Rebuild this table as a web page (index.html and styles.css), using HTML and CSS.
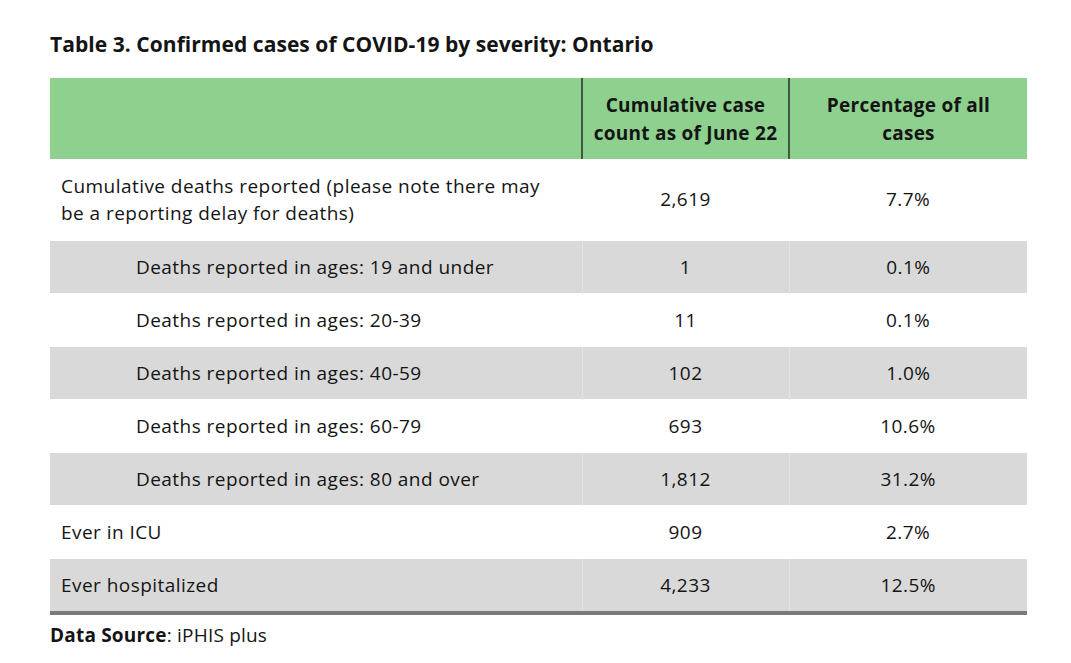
FILE: index.html
```html
<!DOCTYPE html>
<html>
<head>
<meta charset="utf-8">
<link rel="stylesheet" href="styles.css">
</head>
<body>
<div class="page">
  <h1 class="title">Table 3. Confirmed cases of COVID-19 by severity: Ontario</h1>
  <table class="tbl">
    <thead>
      <tr class="head">
        <th class="c1"></th>
        <th class="c2">Cumulative case<br>count as of June 22</th>
        <th class="c3">Percentage of all<br>cases</th>
      </tr>
    </thead>
    <tbody>
      <tr class="tall">
        <td class="lbl">Cumulative deaths reported (please note there may<br>be a reporting delay for deaths)</td>
        <td class="num">2,619</td>
        <td class="num">7.7%</td>
      </tr>
      <tr class="gray">
        <td class="lbl ind">Deaths reported in ages: 19 and under</td>
        <td class="num">1</td>
        <td class="num">0.1%</td>
      </tr>
      <tr>
        <td class="lbl ind">Deaths reported in ages: 20-39</td>
        <td class="num">11</td>
        <td class="num">0.1%</td>
      </tr>
      <tr class="gray">
        <td class="lbl ind">Deaths reported in ages: 40-59</td>
        <td class="num">102</td>
        <td class="num">1.0%</td>
      </tr>
      <tr>
        <td class="lbl ind">Deaths reported in ages: 60-79</td>
        <td class="num">693</td>
        <td class="num">10.6%</td>
      </tr>
      <tr class="gray">
        <td class="lbl ind">Deaths reported in ages: 80 and over</td>
        <td class="num">1,812</td>
        <td class="num">31.2%</td>
      </tr>
      <tr>
        <td class="lbl">Ever in ICU</td>
        <td class="num">909</td>
        <td class="num">2.7%</td>
      </tr>
      <tr class="gray last">
        <td class="lbl">Ever hospitalized</td>
        <td class="num">4,233</td>
        <td class="num">12.5%</td>
      </tr>
    </tbody>
  </table>
  <p class="source"><b>Data Source</b>: iPHIS plus</p>
</div>
</body>
</html>
```

FILE: styles.css
```css
html, body {
  margin: 0;
  padding: 0;
  background: #ffffff;
}
body {
  font-family: "Open Sans", "Liberation Sans", sans-serif;
  color: #141414;
}
.page {
  padding: 32px 0 0 50px;
  width: 975px;
}
.title {
  margin: 0 0 21px 0;
  font-size: 21px;
  font-weight: 700;
  line-height: 25px;
  letter-spacing: 0.05px;
}
.tbl {
  width: 975px;
  border-collapse: collapse;
  table-layout: fixed;
  font-size: 19px;
  letter-spacing: 0.45px;
}
.c1 { width: 531px; }
.c2 { width: 205px; }
.c3 { width: 237px; }
.head th {
  background: #8ed08e;
  height: 81px;
  padding: 0;
  font-weight: 700;
  line-height: 28px;
  letter-spacing: 0.25px;
  text-align: center;
  vertical-align: middle;
}
.head th.c2 {
  border-left: 2px solid #3d5a3d;
  border-right: 2px solid #3d5a3d;
}
td {
  height: 52px;
  padding: 0;
  line-height: 27px;
  vertical-align: middle;
}
tr.tall td {
  height: 81px;
}
tr.gray td {
  background: #d9d9d9;
}
tr.gray td + td {
  border-left: 1px solid #e4e4e4;
}
tbody tr + tr td {
  border-top: 1px solid #ffffff;
}
tr.last td {
  border-bottom: 4px solid #7a7a7a;
}
.lbl {
  padding-left: 11px;
}
.lbl.ind {
  padding-left: 86px;
}
.num {
  text-align: center;
}
.source {
  margin: 8px 0 0 0;
  font-size: 19px;
  line-height: 24px;
  letter-spacing: 0.2px;
}
.source b {
  font-weight: 700;
}
```
